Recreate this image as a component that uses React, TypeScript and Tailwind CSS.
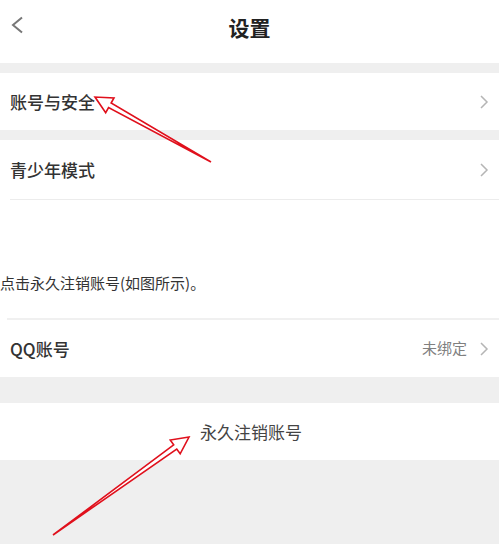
import React from 'react';

const FONT = { fontFamily: '"Noto Sans CJK SC", "Noto Sans", sans-serif' };

type Pt = [number, number];

// outline arrow (double shaft + open head), as drawn on the screenshot
const arrowPoints = (tail: Pt, tip: Pt, head = 17, halfHead = 8.5, halfShaft = 2.6) => {
  const dx = tip[0] - tail[0];
  const dy = tip[1] - tail[1];
  const len = Math.hypot(dx, dy);
  const ux = dx / len;
  const uy = dy / len;
  const nx = -uy;
  const ny = ux;
  const bx = tip[0] - ux * head;
  const by = tip[1] - uy * head;
  const pts: Pt[] = [
    tail,
    [bx + nx * halfShaft, by + ny * halfShaft],
    [bx + nx * halfHead, by + ny * halfHead],
    tip,
    [bx - nx * halfHead, by - ny * halfHead],
    [bx - nx * halfShaft, by - ny * halfShaft],
  ];
  return pts.map((p) => p.join(',')).join(' ');
};

const Chevron = () => (
  <svg width="10" height="16" viewBox="0 0 10 16">
    <path d="M2 2 L8 8 L2 14" fill="none" stroke="#b5b5b5" strokeWidth="1.5" />
  </svg>
);

const Row = ({ label, right }: { label: string; right?: string }) => (
  <div className="flex h-full items-center justify-between pl-[10px] pr-[10px]">
    <span className="text-[17px] font-medium text-[#333]">{label}</span>
    <div className="flex items-center gap-3">
      {right && <span className="text-[15px] text-[#808080]">{right}</span>}
      <Chevron />
    </div>
  </div>
);

const App = () => {
  return (
    <div className="relative h-[544px] w-[499px] overflow-hidden bg-[#efefef]" style={FONT}>
      {/* Header */}
      <div className="relative flex h-[63px] justify-center bg-white pt-[13px]">
        <svg width="16" height="18" viewBox="0 0 16 18" className="absolute left-[9px] top-[16px]">
          <path d="M13 1.5 L4 9 L13 16.5" fill="none" stroke="#777" strokeWidth="2" />
        </svg>
        <span className="text-[21px] font-bold leading-[28px] text-[#222]">设置</span>
      </div>

      <div className="mt-[10px] h-[57px] bg-white">
        <Row label="账号与安全" />
      </div>

      <div className="mt-[10px] h-[59px] bg-white">
        <Row label="青少年模式" />
      </div>

      {/* article text between the two screenshots */}
      <div className="bg-white">
        <div className="ml-[10px] h-px bg-[#ececec]" />
        <div className="flex h-[118px] items-end pb-[24px]">
          <p className="text-[15px] text-[#333]">点击永久注销账号(如图所示)。</p>
        </div>
        <div className="ml-[7px] h-[2px] bg-[#f0f0f0]" />
        <div className="h-[57px]">
          <Row label="QQ账号" right="未绑定" />
        </div>
      </div>

      <div className="mt-[26px] flex h-[57px] items-center justify-center bg-white">
        <span className="pl-[3px] text-[17px] text-[#444]">永久注销账号</span>
      </div>

      {/* red annotation arrows */}
      <svg className="pointer-events-none absolute left-0 top-0" width="499" height="544">
        <polygon
          points={arrowPoints([211, 162], [95, 97])}
          fill="white"
          stroke="#e0101c"
          strokeWidth="1.6"
        />
        <polygon
          points={arrowPoints([53, 535], [189, 437])}
          fill="white"
          stroke="#e0101c"
          strokeWidth="1.6"
        />
      </svg>
    </div>
  );
};

export default App;
